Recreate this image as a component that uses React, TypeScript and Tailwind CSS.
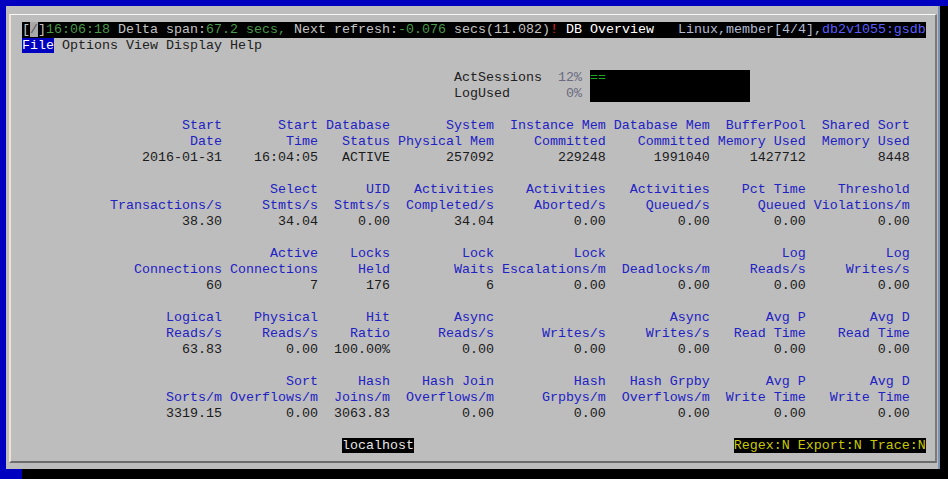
const widths = [25, 12, 9, 13, 14, 13, 12, 13];

const sections: [string, string, string][][] = [
  [
    ["Start", "Date", "2016-01-31"],
    ["Start", "Time", "16:04:05"],
    ["Database", "Status", "ACTIVE"],
    ["System", "Physical Mem", "257092"],
    ["Instance Mem", "Committed", "229248"],
    ["Database Mem", "Committed", "1991040"],
    ["BufferPool", "Memory Used", "1427712"],
    ["Shared Sort", "Memory Used", "8448"],
  ],
  [
    ["", "Transactions/s", "38.30"],
    ["Select", "Stmts/s", "34.04"],
    ["UID", "Stmts/s", "0.00"],
    ["Activities", "Completed/s", "34.04"],
    ["Activities", "Aborted/s", "0.00"],
    ["Activities", "Queued/s", "0.00"],
    ["Pct Time", "Queued", "0.00"],
    ["Threshold", "Violations/m", "0.00"],
  ],
  [
    ["", "Connections", "60"],
    ["Active", "Connections", "7"],
    ["Locks", "Held", "176"],
    ["Lock", "Waits", "6"],
    ["Lock", "Escalations/m", "0.00"],
    ["", "Deadlocks/m", "0.00"],
    ["Log", "Reads/s", "0.00"],
    ["Log", "Writes/s", "0.00"],
  ],
  [
    ["Logical", "Reads/s", "63.83"],
    ["Physical", "Reads/s", "0.00"],
    ["Hit", "Ratio", "100.00%"],
    ["Async", "Reads/s", "0.00"],
    ["", "Writes/s", "0.00"],
    ["Async", "Writes/s", "0.00"],
    ["Avg P", "Read Time", "0.00"],
    ["Avg D", "Read Time", "0.00"],
  ],
  [
    ["", "Sorts/m", "3319.15"],
    ["Sort", "Overflows/m", "0.00"],
    ["Hash", "Joins/m", "3063.83"],
    ["Hash Join", "Overflows/m", "0.00"],
    ["Hash", "Grpbys/m", "0.00"],
    ["Hash Grpby", "Overflows/m", "0.00"],
    ["Avg P", "Write Time", "0.00"],
    ["Avg D", "Write Time", "0.00"],
  ],
];

function line(cells: string[]) {
  return cells.map((c, i) => c.padStart(widths[i])).join("");
}

function Row({ children }: { children?: React.ReactNode }) {
  return <div className="h-[16px] leading-[16px] whitespace-pre">{children}</div>;
}

export default function App() {
  return (
    <div className="w-[948px] h-[479px] bg-black flex flex-col overflow-hidden">
      <div className="h-[6px] bg-[#0000c0]" />
      <div className="flex h-[463px]">
        <div className="w-[6px] bg-[#0000c0]" />
        <div className="w-[932px] bg-[#bdbdbd] pt-[8px] pl-[3px]">
          <div
            className="w-[928px] h-[449px] border-t border-l-2 border-b-2 border-r-2 border-t-[#f8f8f8] border-l-[#f2e2d2] border-b-[#6c6c6c] border-r-[#7a7a7a] pt-[7px] pl-[11px] text-[13.33px] text-[#1a1a1a]"
            style={{ fontFamily: '"Liberation Mono", "DejaVu Sans Mono", monospace' }}
          >
            <Row>
              <span className="inline-block w-[904px] bg-black text-[#c4c4c4]">
                [<span className="bg-[#a8a8a8] text-[#5a5a5a]">/</span>]
                <span className="text-[#4a9a4a]">16:06:18</span> Delta span:
                <span className="text-[#4a9a4a]">67.2 secs,</span> Next refresh:
                <span className="text-[#4a9a4a]">-0.076</span> secs(11.082)
                <span className="text-[#e02020]">!</span>
                <span className="text-white"> DB Overview</span>
                <span className="text-[#b4bcd4]">   Linux,member[4/4],</span>
                <span className="text-[#5c5cff]">db2v1055:gsdb</span>
              </span>
            </Row>
            <Row>
              <span className="bg-[#0000c0] text-white">File</span>
              <span className="text-[#202020]"> Options View Display Help</span>
            </Row>
            <Row />
            <Row>
              {" ".repeat(54)}
              <span className="text-[#202020]">ActSessions</span>
              <span className="text-[#6a6a80]">{"12%".padStart(5)}</span>{" "}
              <span className="inline-block w-[160px] bg-black text-[#1eaa1e]">==</span>
            </Row>
            <Row>
              {" ".repeat(54)}
              <span className="text-[#202020]">LogUsed</span>
              <span className="text-[#6a6a80]">{"0%".padStart(9)}</span>{" "}
              <span className="inline-block w-[160px] bg-black"> </span>
            </Row>
            <Row />
            {sections.map((cols, si) => (
              <div key={si}>
                <Row>
                  <span className="text-[#2222c4]">{line(cols.map((c) => c[0]))}</span>
                </Row>
                <Row>
                  <span className="text-[#2222c4]">{line(cols.map((c) => c[1]))}</span>
                </Row>
                <Row>{line(cols.map((c) => c[2]))}</Row>
                <Row />
              </div>
            ))}
            <Row>
              {" ".repeat(40)}
              <span className="bg-black text-[#e6e6e6]">localhost</span>
              {" ".repeat(40)}
              <span className="bg-black text-[#c8c800]">Regex:N Export:N Trace:N</span>
            </Row>
          </div>
        </div>
        <div className="w-[2px] bg-[#7c94b4]" />
        <div className="flex-1 bg-black" />
      </div>
      <div className="h-[10px] flex">
        <div className="w-[22px] bg-[#0000c0]" />
        <div className="flex-1 bg-black" />
      </div>
    </div>
  );
}
